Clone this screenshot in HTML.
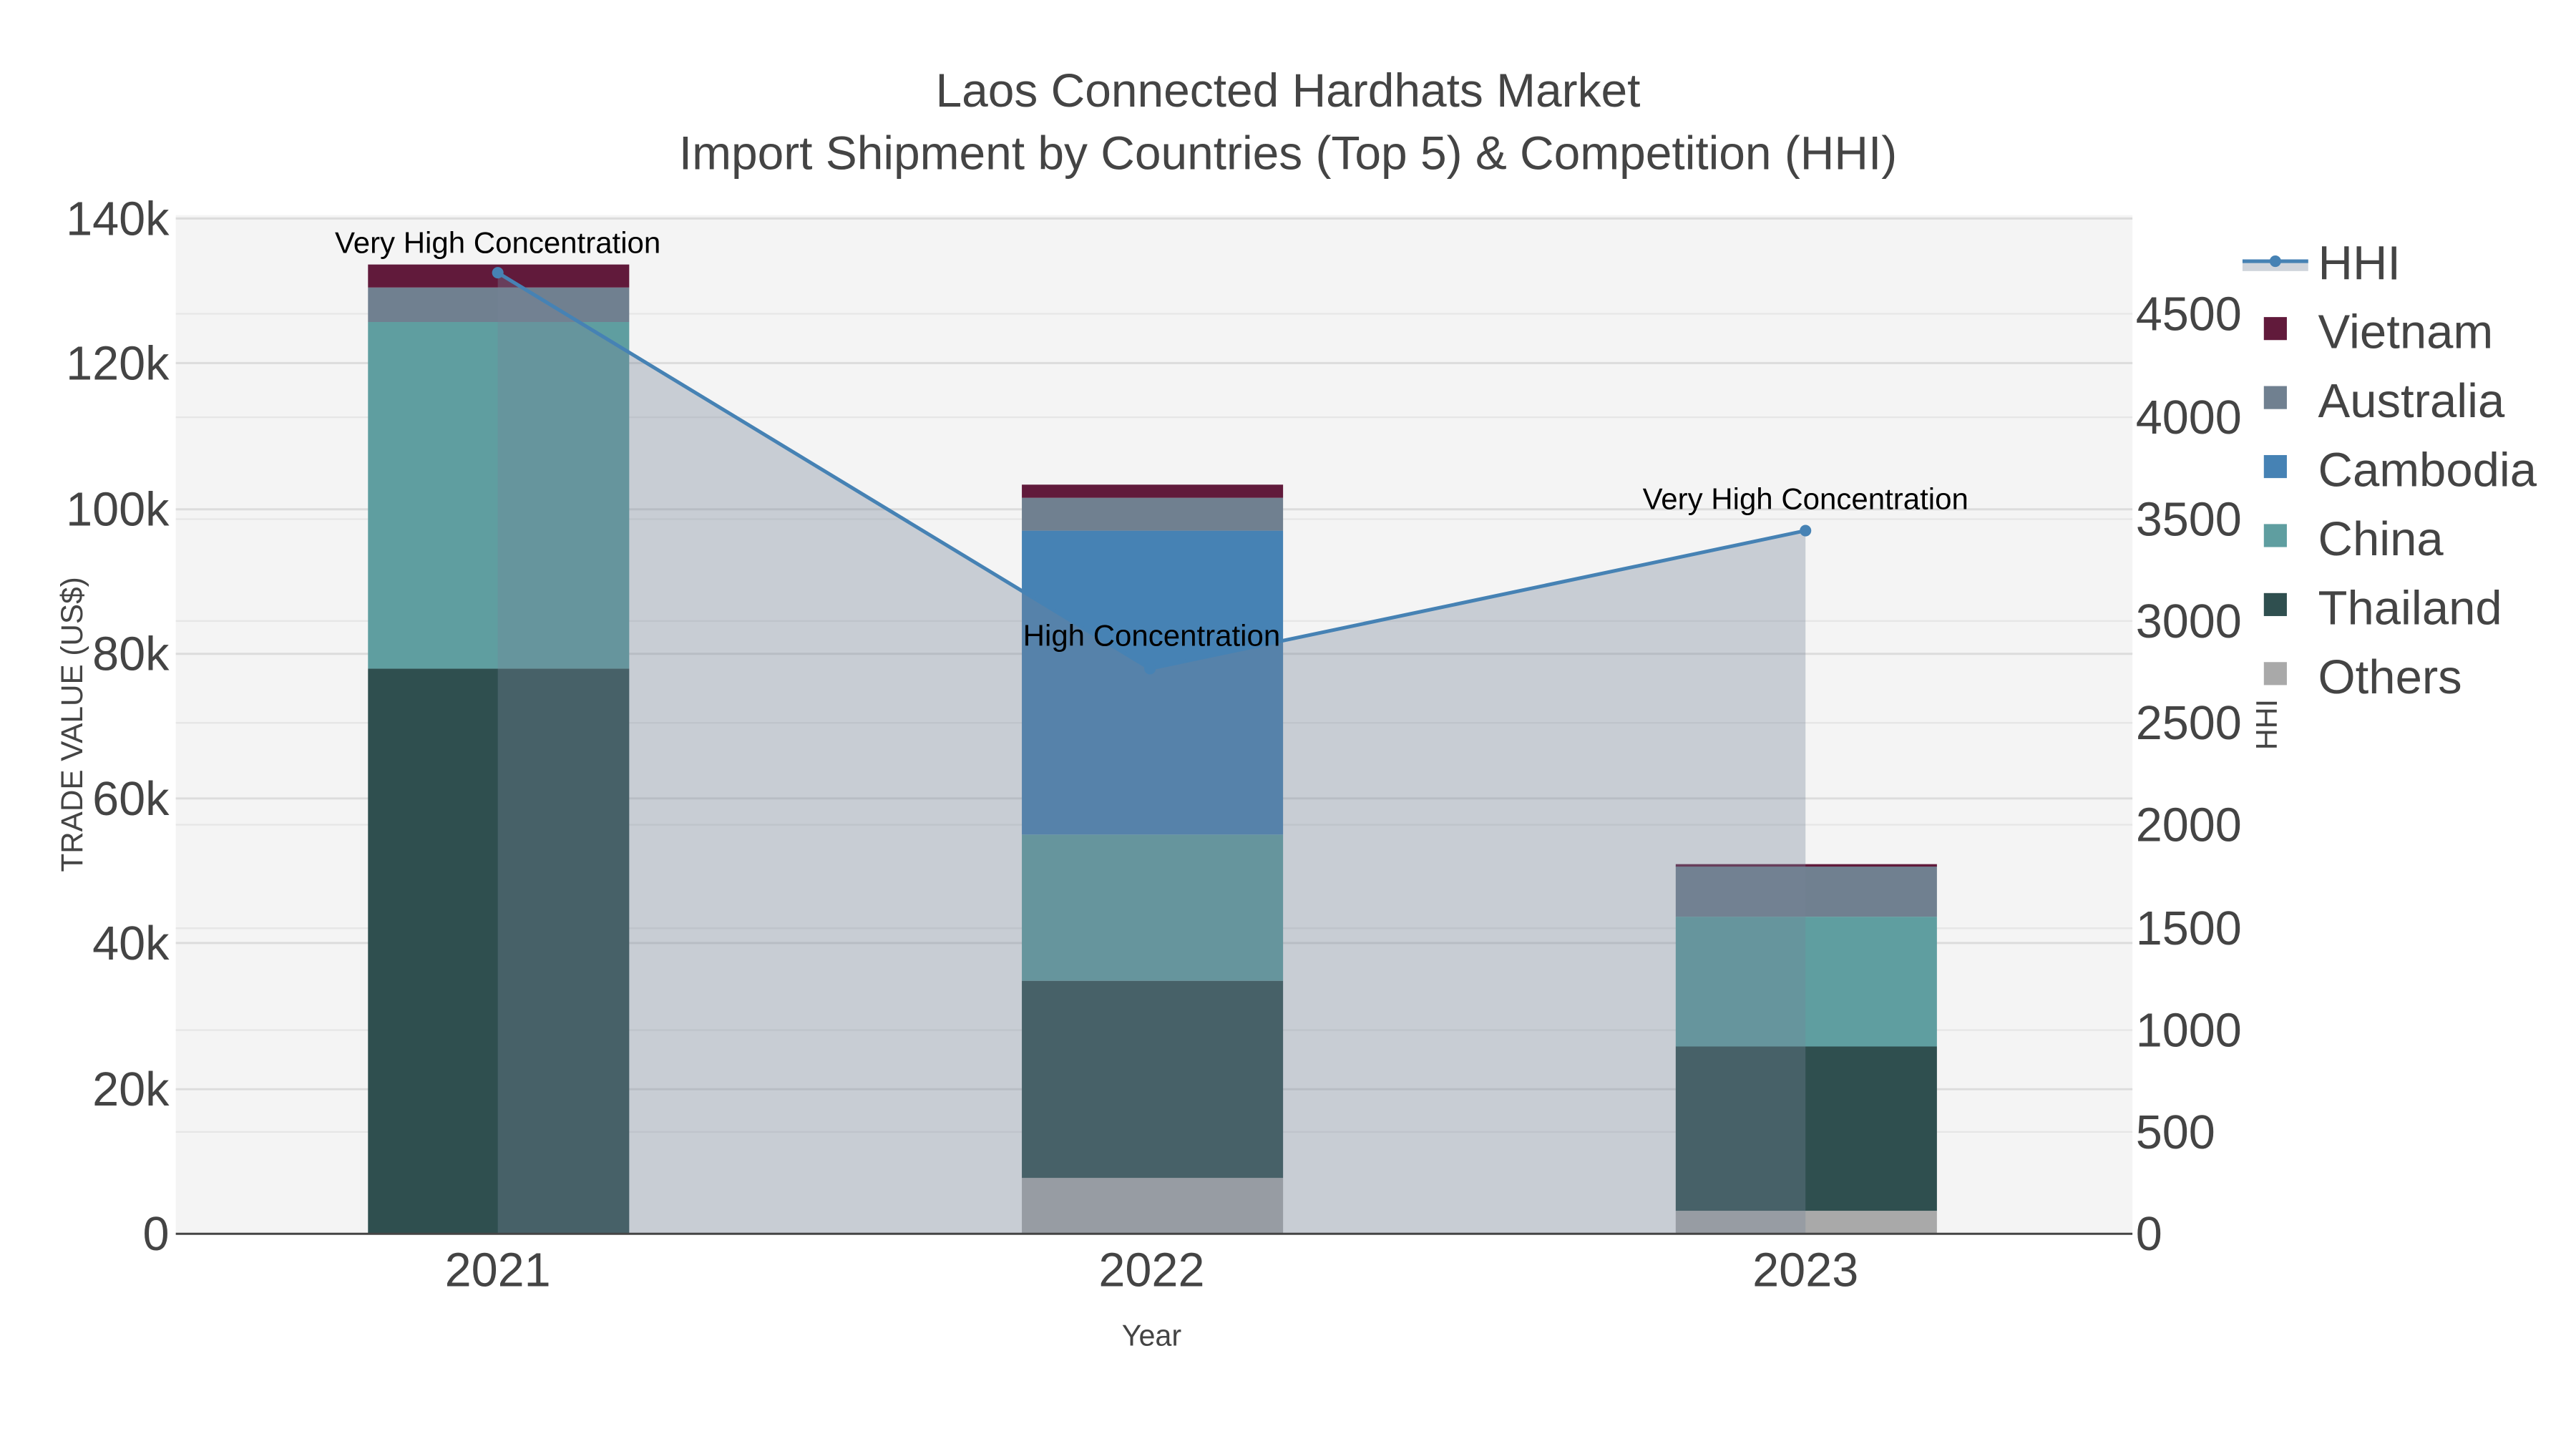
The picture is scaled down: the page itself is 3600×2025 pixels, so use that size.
<!DOCTYPE html>
<html><head><meta charset="utf-8"><style>html,body{margin:0;padding:0;background:#fff}svg{display:block}</style></head>
<body>
<svg width="3600" height="2025" viewBox="0 0 1568 882" xmlns="http://www.w3.org/2000/svg" font-family="Liberation Sans, sans-serif">
<rect width="1568" height="882" fill="#fff"/>
<rect x="107" y="131" width="1191" height="620" fill="#f4f4f4"/>
<g stroke="#e6e6e6" stroke-width="1">
<line x1="107" x2="1298" y1="689" y2="689"/><line x1="107" x2="1298" y1="627" y2="627"/><line x1="107" x2="1298" y1="565" y2="565"/><line x1="107" x2="1298" y1="502" y2="502"/><line x1="107" x2="1298" y1="440" y2="440"/><line x1="107" x2="1298" y1="378" y2="378"/><line x1="107" x2="1298" y1="316" y2="316"/><line x1="107" x2="1298" y1="254" y2="254"/><line x1="107" x2="1298" y1="191" y2="191"/>
</g>
<g stroke="#dcdcdc" stroke-width="1.3">
<line x1="107" x2="1298" y1="663" y2="663"/><line x1="107" x2="1298" y1="574" y2="574"/><line x1="107" x2="1298" y1="486" y2="486"/><line x1="107" x2="1298" y1="398" y2="398"/><line x1="107" x2="1298" y1="310" y2="310"/><line x1="107" x2="1298" y1="221" y2="221"/><line x1="107" x2="1298" y1="133" y2="133"/>
</g>
<rect x="224" y="407" width="159" height="344" fill="#2f4f4f"/>
<rect x="224" y="196" width="159" height="211" fill="#5f9ea0"/>
<rect x="224" y="175" width="159" height="21" fill="#708090"/>
<rect x="224" y="161" width="159" height="14" fill="#611a3b"/>
<rect x="622" y="717" width="159" height="34" fill="#a9a9a9"/>
<rect x="622" y="597" width="159" height="120" fill="#2f4f4f"/>
<rect x="622" y="508" width="159" height="89" fill="#5f9ea0"/>
<rect x="622" y="323" width="159" height="185" fill="#4682b4"/>
<rect x="622" y="303" width="159" height="20" fill="#708090"/>
<rect x="622" y="295" width="159" height="8" fill="#611a3b"/>
<rect x="1020" y="737" width="159" height="14" fill="#a9a9a9"/>
<rect x="1020" y="637" width="159" height="100" fill="#2f4f4f"/>
<rect x="1020" y="558" width="159" height="79" fill="#5f9ea0"/>
<rect x="1020" y="527" width="159" height="31" fill="#708090"/>
<rect x="1020" y="526" width="159" height="1.5" fill="#611a3b"/>
<polygon points="303,166 700,407 1099,323 1099,751 303,751" fill="rgb(118,132,152)" fill-opacity="0.35"/>
<polyline points="303,166 700,407 1099,323" fill="none" stroke="#4682b4" stroke-width="2.2"/>
<circle cx="303" cy="166" r="3.5" fill="#4682b4"/><circle cx="700" cy="407" r="3.5" fill="#4682b4"/><circle cx="1099" cy="323" r="3.5" fill="#4682b4"/>
<line x1="107" x2="1298" y1="751" y2="751" stroke="#444" stroke-width="1.3"/>
<g font-size="18.3" fill="#000" text-anchor="middle">
<text x="303" y="154">Very High Concentration</text>
<text x="701" y="393">High Concentration</text>
<text x="1099" y="310">Very High Concentration</text>
</g>
<g font-size="28.7" fill="#444" text-anchor="middle">
<text x="784" y="65">Laos Connected Hardhats Market</text>
<text x="784" y="103">Import Shipment by Countries (Top 5) &amp; Competition (HHI)</text>
</g>
<g font-size="29" fill="#444" text-anchor="middle">
<text x="303" y="783">2021</text><text x="701" y="783">2022</text><text x="1099" y="783">2023</text>
</g>
<g font-size="29" fill="#444" text-anchor="end">
<text x="103" y="761">0</text><text x="103" y="673">20k</text><text x="103" y="584">40k</text><text x="103" y="496">60k</text><text x="103" y="408">80k</text><text x="103" y="320">100k</text><text x="103" y="231">120k</text><text x="103" y="143">140k</text>
</g>
<g font-size="29" fill="#444">
<text x="1300" y="761">0</text><text x="1300" y="699">500</text><text x="1300" y="637">1000</text><text x="1300" y="575">1500</text><text x="1300" y="512">2000</text><text x="1300" y="450">2500</text><text x="1300" y="388">3000</text><text x="1300" y="326">3500</text><text x="1300" y="264">4000</text><text x="1300" y="201">4500</text>
</g>
<text x="701" y="819" font-size="18" fill="#444" text-anchor="middle">Year</text>
<text transform="translate(50,441) rotate(-90)" font-size="18.4" fill="#444" text-anchor="middle">TRADE VALUE (US$)</text>
<text transform="translate(1386,441) rotate(-90)" font-size="18" fill="#444" text-anchor="middle">HHI</text>
<rect x="1365" y="158" width="40" height="7" fill="rgb(118,132,152)" fill-opacity="0.35"/>
<line x1="1365" x2="1405" y1="159" y2="159" stroke="#4682b4" stroke-width="2.2"/><circle cx="1385" cy="159" r="3.5" fill="#4682b4"/>
<rect x="1378" y="193" width="14" height="14" fill="#611a3b"/>
<rect x="1378" y="235" width="14" height="14" fill="#708090"/>
<rect x="1378" y="277" width="14" height="14" fill="#4682b4"/>
<rect x="1378" y="319" width="14" height="14" fill="#5f9ea0"/>
<rect x="1378" y="361" width="14" height="14" fill="#2f4f4f"/>
<rect x="1378" y="403" width="14" height="14" fill="#a9a9a9"/>
<g font-size="29.2" fill="#444">
<text x="1411" y="170">HHI</text><text x="1411" y="212">Vietnam</text><text x="1411" y="254">Australia</text><text x="1411" y="296">Cambodia</text><text x="1411" y="338">China</text><text x="1411" y="380">Thailand</text><text x="1411" y="422">Others</text>
</g>
</svg>
</body></html>
